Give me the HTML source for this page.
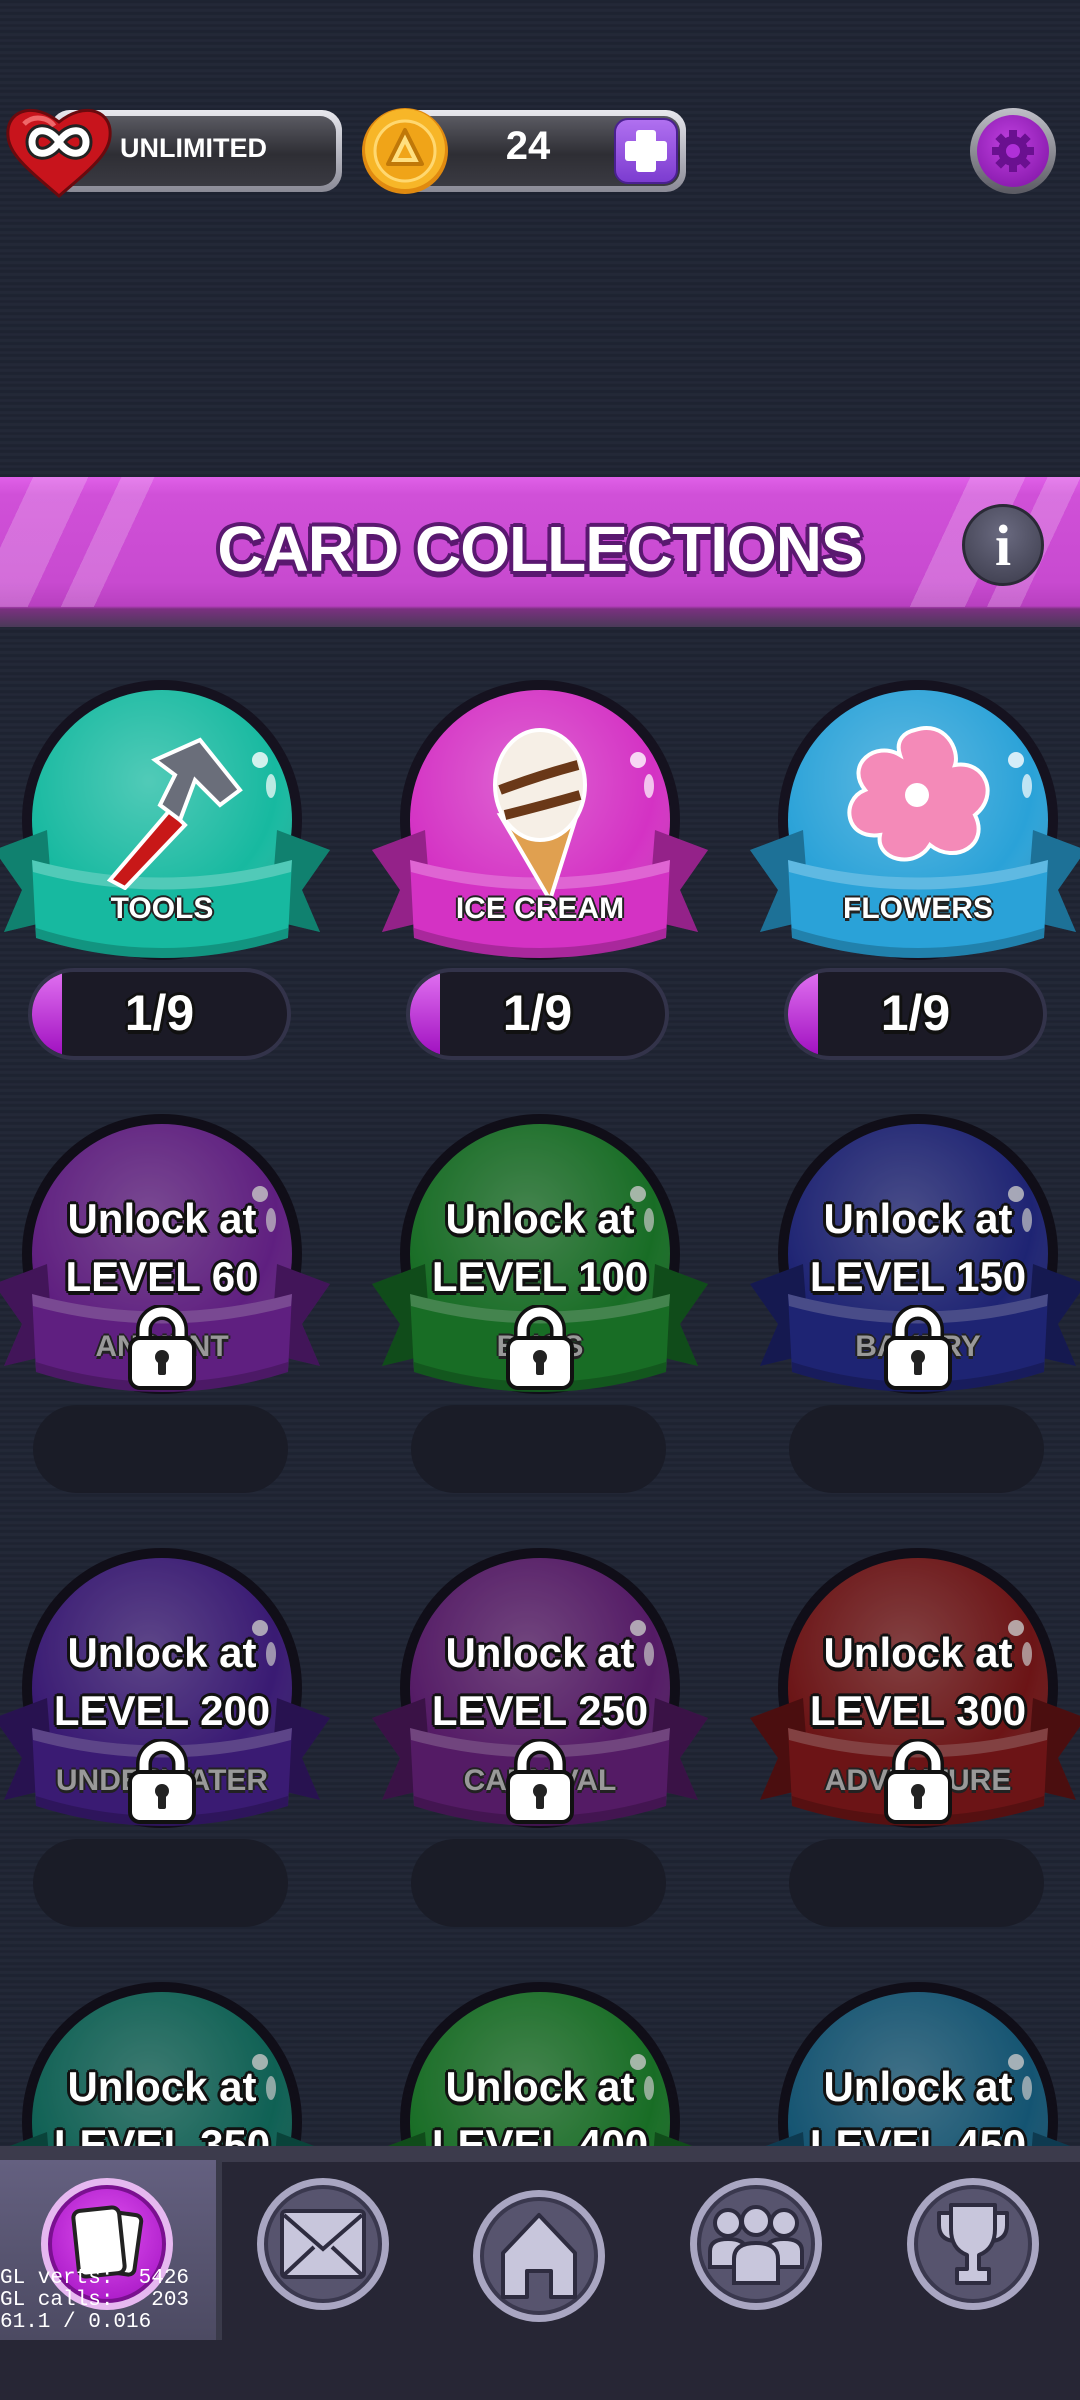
<!DOCTYPE html>
<html><head><meta charset="utf-8">
<style>
*{margin:0;padding:0;box-sizing:border-box}
body{width:1080px;height:2400px;overflow:hidden;position:relative;font-family:"Liberation Sans",sans-serif;
background:#1f2433;background-image:repeating-linear-gradient(0deg,rgba(255,255,255,0.018) 0 3px,rgba(0,0,0,0.03) 3px 6px)}
.abs{position:absolute}
.out{color:#fff;font-weight:bold;-webkit-text-stroke:0;text-shadow:-3px 0 #111,3px 0 #111,0 -3px #111,0 3px #111,-2px -2px #111,2px 2px #111,-2px 2px #111,2px -2px #111,0 4px #111}
.badge{position:absolute;width:340px;height:290px}
.lk2{filter:brightness(.78)}
.lbl{position:absolute;width:340px;text-align:center;font-size:30px;font-weight:bold;color:#fff;text-shadow:-2px 0 #222,2px 0 #222,0 -2px #222,0 3px #222}
.bar{position:absolute;width:263px;height:92px;border-radius:46px;background:#1b1a26;border:4px solid #33334a;overflow:hidden}
.bar .fill{position:absolute;left:0;top:0;bottom:0;width:30px;background:linear-gradient(#e070f0,#a010c0);border-radius:40px 0 0 40px}
.bar span{position:absolute;left:0;right:0;top:12px;text-align:center;font-size:50px}
.ebar{position:absolute;width:255px;height:88px;border-radius:44px;background:#1a1c27}
.ul{position:absolute;width:340px;text-align:center;font-size:42px;line-height:58px}
.lock{position:absolute;width:70px;height:85px}
.nav{position:absolute;width:132px;height:132px;border-radius:50%;background:#a9a6c2;padding:7px}
.nav .in{width:100%;height:100%;border-radius:50%;background:#57546e;border:4px solid #3a384e;display:flex;align-items:center;justify-content:center}
</style></head><body>
<svg width="0" height="0" style="position:absolute">
<defs>
<radialGradient id="gl" cx="0.45" cy="0.35" r="0.7"><stop offset="0" stop-color="#fff" stop-opacity="0.25"/><stop offset="0.7" stop-color="#fff" stop-opacity="0"/><stop offset="1" stop-color="#000" stop-opacity="0.2"/></radialGradient>
<symbol id="bd" viewBox="0 0 340 290">
<circle cx="170" cy="140" r="140" fill="#15121f"/>
<circle cx="170" cy="140" r="130" fill="currentColor"/>
<circle cx="170" cy="140" r="130" fill="url(#gl)"/>
<circle cx="268" cy="80" r="8" fill="#fff" opacity=".8"/>
<ellipse cx="279" cy="106" rx="5" ry="12" fill="#fff" opacity=".7"/>
<path d="M2,170 L55,150 L62,240 L12,252 L30,210 Z" fill="currentColor"/>
<path d="M2,170 L55,150 L62,240 L12,252 L30,210 Z" fill="#000" opacity=".3"/>
<path d="M338,170 L285,150 L278,240 L328,252 L310,210 Z" fill="currentColor"/>
<path d="M338,170 L285,150 L278,240 L328,252 L310,210 Z" fill="#000" opacity=".3"/>
<path d="M40,180 Q170,215 300,180 L296,258 Q170,298 44,258 Z" fill="currentColor"/>
<path d="M40,180 Q170,215 300,180 L299,192 Q170,227 41,192 Z" fill="#fff" opacity=".25"/>
<path d="M44,258 Q170,298 296,258 L296,248 Q170,288 44,248 Z" fill="#000" opacity=".2"/>
</symbol>
<symbol id="lk" viewBox="0 0 70 85">
<path d="M17,38 V25 A18,18 0 0 1 53,25 V38" fill="none" stroke="#111" stroke-width="16"/>
<path d="M17,38 V25 A18,18 0 0 1 53,25 V38" fill="none" stroke="#fff" stroke-width="9"/>
<rect x="3" y="33" width="64" height="50" rx="10" fill="#fff" stroke="#111" stroke-width="4"/>
<circle cx="35" cy="52" r="7" fill="#222"/><rect x="31" y="54" width="8" height="16" rx="2" fill="#222"/>
</symbol>
</defs></svg>

<!-- top bar -->
<div class="abs" style="left:50px;top:110px;width:292px;height:82px;border-radius:20px;background:linear-gradient(#e8e8ee,#8a8a96);padding:6px">
<div style="width:100%;height:100%;border-radius:16px;background:linear-gradient(#5a5a62,#2e2e34 55%,#3a3a42)"></div></div>
<div class="abs" style="left:120px;top:133px;font-size:27px;font-weight:bold;color:#fff">UNLIMITED</div>
<svg class="abs" style="left:4px;top:104px" width="110" height="96" viewBox="0 0 110 96">
<path d="M55,92 C20,62 2,48 4,26 C6,6 30,-2 55,18 C80,-2 104,6 106,26 C108,48 90,62 55,92Z" fill="#c8141c" stroke="#6a0a0e" stroke-width="3"/>
<path d="M20,20 C30,10 45,14 50,22" stroke="#ff8a8a" stroke-width="5" fill="none" opacity=".7"/>
<path d="M55,38 C45,22 28,24 28,38 C28,52 45,54 55,38 C65,22 82,24 82,38 C82,52 65,54 55,38Z" fill="none" stroke="#222" stroke-width="13"/>
<path d="M55,38 C45,22 28,24 28,38 C28,52 45,54 55,38 C65,22 82,24 82,38 C82,52 65,54 55,38Z" fill="none" stroke="#fff" stroke-width="7"/>
</svg>

<div class="abs" style="left:380px;top:110px;width:306px;height:82px;border-radius:20px;background:linear-gradient(#e8e8ee,#8a8a96);padding:6px">
<div style="width:100%;height:100%;border-radius:16px;background:linear-gradient(#5a5a62,#2e2e34 55%,#3a3a42)"></div></div>
<div class="abs" style="left:470px;top:124px;width:116px;text-align:center;font-size:40px;font-weight:bold;color:#fff">24</div>
<div class="abs" style="left:614px;top:118px;width:64px;height:66px;border-radius:14px;background:linear-gradient(#b070f0,#7c3cd0);border:2px solid #4a2090"></div>
<div class="abs" style="left:636px;top:130px;width:20px;height:42px;background:#fff;border-radius:3px"></div>
<div class="abs" style="left:625px;top:141px;width:42px;height:20px;background:#fff;border-radius:3px"></div>
<svg class="abs" style="left:360px;top:106px" width="90" height="90" viewBox="0 0 90 90">
<circle cx="45" cy="45" r="43" fill="#e08a10"/><circle cx="45" cy="43" r="40" fill="#f7b628"/>
<circle cx="45" cy="45" r="30" fill="#f0a418" stroke="#ffd870" stroke-width="3"/>
<path d="M45,24 L62,58 H28 Z" fill="#ffe080" stroke="#c07808" stroke-width="4" stroke-linejoin="round"/>
<path d="M45,38 L52,52 H38 Z" fill="#f0a418"/></svg>

<div class="abs" style="left:970px;top:108px;width:86px;height:86px;border-radius:50%;background:linear-gradient(#c0c0c8,#5a5a62);padding:7px">
<div style="width:100%;height:100%;border-radius:50%;background:radial-gradient(circle at 45% 40%,#c040e0,#7a10a0);display:flex;align-items:center;justify-content:center">
<svg width="48" height="48" viewBox="0 0 48 48"><g fill="#6a1090"><circle cx="24" cy="24" r="15"/><rect x="20" y="3" width="8" height="42"/><rect x="3" y="20" width="42" height="8"/><rect x="20" y="3" width="8" height="42" transform="rotate(45 24 24)"/><rect x="20" y="3" width="8" height="42" transform="rotate(-45 24 24)"/></g><circle cx="24" cy="24" r="7" fill="#b030d8"/></svg></div></div>

<!-- banner -->
<div class="abs" style="left:0;top:477px;width:1080px;height:150px;background:linear-gradient(#e060e8 0,#d050d8 12%,#c84ad0 70%,#b840c0 86%,#7a3080 88%,#4a3a58 100%)"></div>
<div class="abs" style="left:0;top:477px;width:1080px;height:130px;overflow:hidden;background:linear-gradient(115deg,transparent 0,transparent 30px,rgba(255,255,255,.2) 30px,rgba(255,255,255,.2) 80px,transparent 80px,transparent 110px,rgba(255,255,255,.2) 110px,rgba(255,255,255,.2) 140px,transparent 140px)"></div>
<div class="abs" style="left:860px;top:477px;width:220px;height:130px;background:linear-gradient(115deg,transparent 0,transparent 100px,rgba(255,255,255,.2) 100px,rgba(255,255,255,.2) 150px,transparent 150px,transparent 170px,rgba(255,255,255,.2) 170px,rgba(255,255,255,.2) 200px,transparent 200px)"></div>
<div class="abs" style="left:0;top:512px;width:1080px;text-align:center;font-size:64px;font-weight:bold;color:#fff;letter-spacing:-1px;text-shadow:-4px 0 #5a1870,4px 0 #5a1870,0 -4px #5a1870,0 4px #5a1870,-3px -3px #5a1870,3px 3px #5a1870,-3px 3px #5a1870,3px -3px #5a1870,0 6px #5a1870">CARD COLLECTIONS</div>
<div class="abs" style="left:962px;top:504px;width:82px;height:82px;border-radius:50%;background:radial-gradient(circle at 50% 35%,#6a6a80,#3a3a4a);border:3px solid #2a2a36;font-family:'Liberation Serif',serif;font-weight:bold;font-size:58px;color:#fff;text-align:center;line-height:78px">i</div>

<!-- row 1 -->
<svg class="badge" style="left:-8px;top:680px;color:#17b9a0"><use href="#bd"/></svg>
<svg class="badge" style="left:370px;top:680px;color:#d432c4"><use href="#bd"/></svg>
<svg class="badge" style="left:748px;top:680px;color:#2aa2d8"><use href="#bd"/></svg>
<svg class="abs" style="left:80px;top:730px" width="180" height="160" viewBox="0 0 180 160">
<path d="M30,150 L90,80 L105,95 L45,158 Z" fill="#c81818" stroke="#fff" stroke-width="4"/>
<path d="M75,30 L120,10 L160,60 L140,75 L115,50 L100,90 L80,75 L95,45 Z" fill="#6a6e7a" stroke="#fff" stroke-width="4"/></svg>
<svg class="abs" style="left:460px;top:705px" width="160" height="200" viewBox="0 0 160 200">
<path d="M40,110 L120,100 L90,195 Z" fill="#e0a050" stroke="#fff" stroke-width="4"/>
<ellipse cx="80" cy="80" rx="45" ry="55" fill="#f6efe6" stroke="#fff" stroke-width="4"/>
<path d="M40,85 Q80,70 118,60" stroke="#6a3818" stroke-width="10" fill="none"/><path d="M45,110 Q85,100 120,90" stroke="#6a3818" stroke-width="10" fill="none"/></svg>
<svg class="abs" style="left:835px;top:720px" width="165" height="150" viewBox="0 0 165 150">
<path d="M80,10 C110,0 125,30 120,45 C150,40 165,75 140,95 C155,125 120,145 95,125 C80,150 40,140 45,115 C10,120 5,80 30,70 C10,45 40,20 65,35 C60,20 70,12 80,10Z" fill="#f48ab8" stroke="#fff" stroke-width="4"/>
<circle cx="82" cy="75" r="12" fill="#fff"/></svg>
<div class="lbl" style="left:-8px;top:892px">TOOLS</div>
<div class="lbl" style="left:370px;top:892px">ICE CREAM</div>
<div class="lbl" style="left:748px;top:892px">FLOWERS</div>
<div class="bar" style="left:28px;top:968px"><div class="fill"></div><span class="out">1/9</span></div>
<div class="bar" style="left:406px;top:968px"><div class="fill"></div><span class="out">1/9</span></div>
<div class="bar" style="left:784px;top:968px"><div class="fill"></div><span class="out">1/9</span></div>

<!-- row 2 -->
<svg class="badge lk2" style="left:-8px;top:1114px;color:#7a28a4"><use href="#bd"/></svg>
<svg class="badge lk2" style="left:370px;top:1114px;color:#1f8c30"><use href="#bd"/></svg>
<svg class="badge lk2" style="left:748px;top:1114px;color:#272e94"><use href="#bd"/></svg>
<div class="lbl" style="left:-8px;top:1330px;color:#999">ANCIENT</div>
<div class="lbl" style="left:370px;top:1330px;color:#999">BUGS</div>
<div class="lbl" style="left:748px;top:1330px;color:#999">BAKERY</div>
<div class="ul out" style="left:-8px;top:1190px">Unlock at<br>LEVEL 60</div>
<div class="ul out" style="left:370px;top:1190px">Unlock at<br>LEVEL 100</div>
<div class="ul out" style="left:748px;top:1190px">Unlock at<br>LEVEL 150</div>
<svg class="lock" style="left:127px;top:1305px"><use href="#lk"/></svg>
<svg class="lock" style="left:505px;top:1305px"><use href="#lk"/></svg>
<svg class="lock" style="left:883px;top:1305px"><use href="#lk"/></svg>
<div class="ebar" style="left:33px;top:1405px"></div>
<div class="ebar" style="left:411px;top:1405px"></div>
<div class="ebar" style="left:789px;top:1405px"></div>

<!-- row 3 -->
<svg class="badge lk2" style="left:-8px;top:1548px;color:#4a2294"><use href="#bd"/></svg>
<svg class="badge lk2" style="left:370px;top:1548px;color:#6c2282"><use href="#bd"/></svg>
<svg class="badge lk2" style="left:748px;top:1548px;color:#8a1a1c"><use href="#bd"/></svg>
<div class="lbl" style="left:-8px;top:1764px;color:#999">UNDERWATER</div>
<div class="lbl" style="left:370px;top:1764px;color:#999">CARNIVAL</div>
<div class="lbl" style="left:748px;top:1764px;color:#999">ADVENTURE</div>
<div class="ul out" style="left:-8px;top:1624px">Unlock at<br>LEVEL 200</div>
<div class="ul out" style="left:370px;top:1624px">Unlock at<br>LEVEL 250</div>
<div class="ul out" style="left:748px;top:1624px">Unlock at<br>LEVEL 300</div>
<svg class="lock" style="left:127px;top:1739px"><use href="#lk"/></svg>
<svg class="lock" style="left:505px;top:1739px"><use href="#lk"/></svg>
<svg class="lock" style="left:883px;top:1739px"><use href="#lk"/></svg>
<div class="ebar" style="left:33px;top:1839px"></div>
<div class="ebar" style="left:411px;top:1839px"></div>
<div class="ebar" style="left:789px;top:1839px"></div>

<!-- row 4 -->
<svg class="badge lk2" style="left:-8px;top:1982px;color:#137c6c"><use href="#bd"/></svg>
<svg class="badge lk2" style="left:370px;top:1982px;color:#1f8c30"><use href="#bd"/></svg>
<svg class="badge lk2" style="left:748px;top:1982px;color:#1a6c92"><use href="#bd"/></svg>
<div class="ul out" style="left:-8px;top:2058px">Unlock at<br>LEVEL 350</div>
<div class="ul out" style="left:370px;top:2058px">Unlock at<br>LEVEL 400</div>
<div class="ul out" style="left:748px;top:2058px">Unlock at<br>LEVEL 450</div>

<!-- nav -->
<div class="abs" style="left:0;top:2146px;width:1080px;height:254px;background:#272635;border-top:16px solid #3c3b4c"></div>
<div class="abs" style="left:0;top:2160px;width:222px;height:180px;background:linear-gradient(#646080,#4c4a62);border-right:6px solid #3a3a4a"></div>
<div class="nav" style="left:41px;top:2178px;background:#e6b8f0"><div class="in" style="background:radial-gradient(circle at 50% 40%,#e050f0,#a010c0);border-color:#7a1090">
<svg width="90" height="90" viewBox="0 0 90 90"><rect x="38" y="14" width="38" height="60" rx="6" fill="#fff" stroke="#222" stroke-width="4" transform="rotate(8 57 44)"/><rect x="14" y="10" width="46" height="66" rx="7" fill="#fff" stroke="#222" stroke-width="4" transform="rotate(-6 37 43)"/></svg></div></div>
<div class="nav" style="left:257px;top:2178px"><div class="in"><svg width="86" height="70" viewBox="0 0 86 70"><rect x="2" y="2" width="82" height="66" rx="4" fill="#c8c6dc" stroke="#2e2c40" stroke-width="4"/><path d="M4,6 L43,40 L82,6 M4,66 L34,38 M82,66 L52,38" stroke="#2e2c40" stroke-width="4" fill="none"/></svg></div></div>
<div class="nav" style="left:473px;top:2190px"><div class="in"><svg width="80" height="90" viewBox="0 0 80 90"><path d="M40,4 L76,42 V86 H52 V60 H28 V86 H4 V42 Z" fill="#c8c6dc" stroke="#2e2c40" stroke-width="4" stroke-linejoin="round"/></svg></div></div>
<div class="nav" style="left:690px;top:2178px"><div class="in"><svg width="100" height="86" viewBox="0 0 100 86"><g fill="#c8c6dc" stroke="#2e2c40" stroke-width="4"><circle cx="22" cy="22" r="13"/><circle cx="78" cy="22" r="13"/><path d="M4,66 V50 Q4,38 22,38 Q40,38 40,50 V66Z"/><path d="M60,66 V50 Q60,38 78,38 Q96,38 96,50 V66Z"/><circle cx="50" cy="20" r="14"/><path d="M28,82 V58 Q28,42 50,42 Q72,42 72,58 V82Z"/></g></svg></div></div>
<div class="nav" style="left:907px;top:2178px"><div class="in"><svg width="76" height="90" viewBox="0 0 76 90"><path d="M16,6 H60 V30 Q60,50 44,56 V70 H54 V84 H22 V70 H32 V56 Q16,50 16,30 Z M16,14 H4 V26 Q4,40 18,42 M60,14 H72 V26 Q72,40 58,42" fill="#c8c6dc" stroke="#2e2c40" stroke-width="4" stroke-linejoin="round"/></svg></div></div>
<div class="abs" style="left:0;top:2268px;font-family:'Liberation Mono',monospace;font-size:21px;line-height:22px;color:#fff;white-space:pre">GL verts:  5426
GL calls:   203
61.1 / 0.016</div>
</body></html>
